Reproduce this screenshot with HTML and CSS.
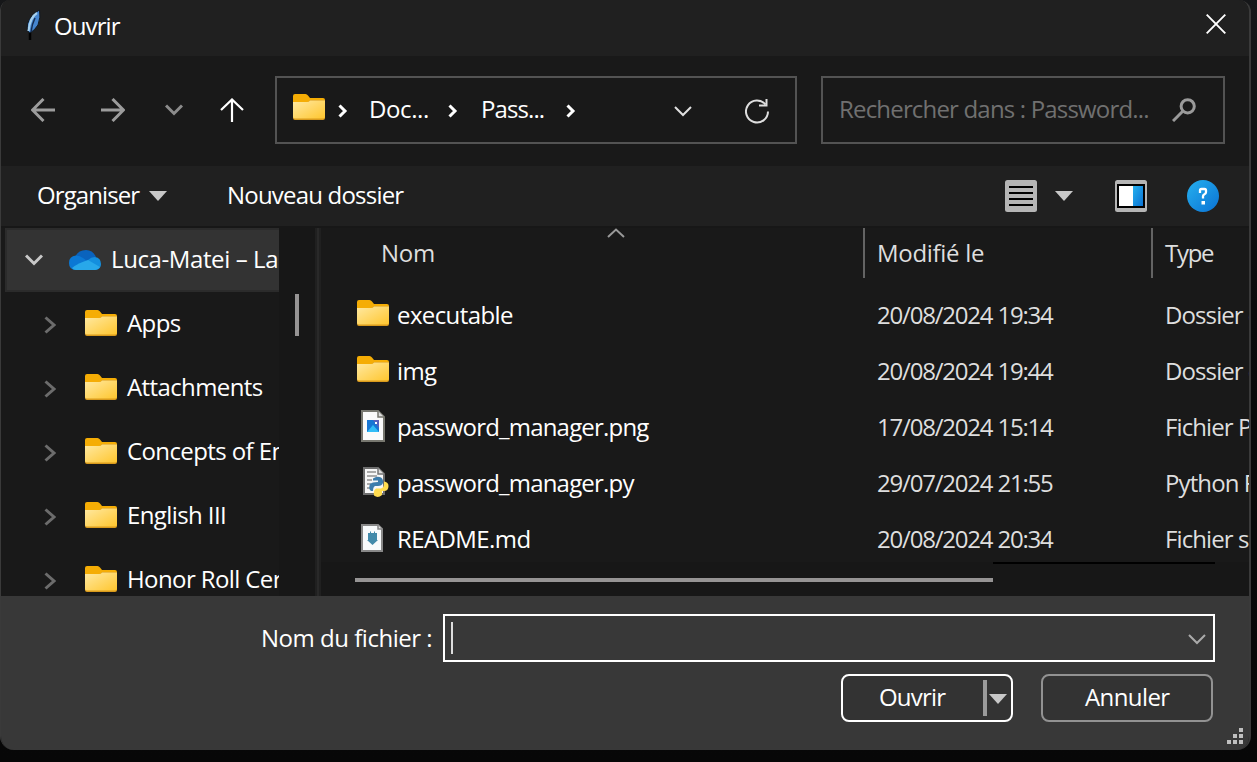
FILE: index.html
```html
<!DOCTYPE html>
<html lang="fr">
<head>
<meta charset="utf-8">
<title>Ouvrir</title>
<link rel="stylesheet" href="styles.css">
</head>
<body>
<svg class="defs" width="0" height="0">
  <defs>
    <linearGradient id="gold" x1="0" y1="0" x2="1" y2="1"><stop offset="0" stop-color="#ffe9a2"/><stop offset="1" stop-color="#ffc62e"/></linearGradient>
    <linearGradient id="blue" x1="0" y1="0" x2="1" y2="1"><stop offset="0" stop-color="#26b0ee"/><stop offset="1" stop-color="#0a72d4"/></linearGradient>
    <symbol id="folder" viewBox="0 0 32 26">
      <path d="M0 2Q0 0 2 0H12.500Q14 0 15 1.500L17 4H30Q32 4 32 6V20H0Z" fill="#f5ad05"/>
      <path d="M0 8H14Q16 8 17 6H32V24Q32 26 30 26H2Q0 26 0 24Z" fill="#d99a1c"/>
      <path d="M0 8H14Q16 8 17 6.500H32V23Q32 24.500 30 24.500H2Q0 24.500 0 23Z" fill="url(#gold)"/>
    </symbol>
    <symbol id="right" viewBox="0 0 12 18"><path d="M1.500 1.500L10 9L1.500 16.500" fill="none" stroke="#6c6c6c" stroke-width="3"/></symbol>
    <symbol id="crumb" viewBox="0 0 10 14"><path d="M1.500 1.500L7 7L1.500 12.500" fill="none" stroke="#fff" stroke-width="3"/></symbol>
    <symbol id="tri" viewBox="0 0 18 10"><path d="M0 0H18L9 10Z" fill="#c8c8c8"/></symbol>
  </defs>
</svg>
<div class="window">
  <header class="titlebar">
    <svg class="feather" viewBox="0 0 18 32"><path d="M6 22V31" stroke="#000" stroke-width="2.500"/><path d="M15.500 1Q17 8 14 16Q11 21 6 24Q2.500 23 3.500 15Q6 6 15.500 1Z" fill="#4585cf" stroke="#101820" stroke-width="1"/><path d="M13 4Q6 8 4.500 22" fill="none" stroke="#a5d0ee" stroke-width="2.200"/><path d="M11 9Q8 15 7 23" fill="none" stroke="#142c50" stroke-width="1.500"/></svg>
    <span class="t title">Ouvrir</span>
    <svg class="close" viewBox="0 0 20 20"><path d="M.7.700L19.300 19.300M19.300.7L.7 19.300" stroke="#fff" stroke-width="1.900"/></svg>
  </header>

  <nav class="navbar">
    <svg class="back" viewBox="0 0 24 24"><path d="M24 12H2M12.500 1L1.500 12L12.500 23" fill="none" stroke="#9c9c9c" stroke-width="3"/></svg>
    <svg class="fwd" viewBox="0 0 24 24"><path d="M0 12H22M11.500 1L22.500 12L11.500 23" fill="none" stroke="#9c9c9c" stroke-width="3"/></svg>
    <svg class="recent" viewBox="0 0 18 12"><path d="M1 1.500L9 9.500L17 1.500" fill="none" stroke="#8c8c8c" stroke-width="3"/></svg>
    <svg class="up" viewBox="0 0 24 24"><path d="M12 24V2M1 12L12 1.500L23 12" fill="none" stroke="#fff" stroke-width="2.200"/></svg>
    <div class="address">
      <svg class="folder"><use href="#folder"/></svg>
      <svg class="crumb c1"><use href="#crumb"/></svg>
      <span class="t doc">Doc...</span>
      <svg class="crumb c2"><use href="#crumb"/></svg>
      <span class="t pass">Pass...</span>
      <svg class="crumb c3"><use href="#crumb"/></svg>
      <svg class="drop" viewBox="0 0 18 11"><path d="M1 1L9 9L17 1" fill="none" stroke="#e0e0e0" stroke-width="2"/></svg>
      <svg class="reload" viewBox="0 0 24 26"><path d="M20.500 6.500A11 11 0 1 0 23 13.500" fill="none" stroke="#dedede" stroke-width="2"/><path d="M21.500 1V7.500H14" fill="none" stroke="#dedede" stroke-width="2"/></svg>
    </div>
    <div class="search">
      <span class="t query">Rechercher dans : Password...</span>
      <svg class="lens" viewBox="0 0 24 24"><circle cx="15.700" cy="8.300" r="6.600" fill="none" stroke="#9a9a9a" stroke-width="3"/><path d="M11 13L1 23" stroke="#9a9a9a" stroke-width="3"/></svg>
    </div>
  </nav>

  <div class="toolbar">
    <span class="t organise">Organiser</span>
    <svg class="tri t1"><use href="#tri"/></svg>
    <span class="t newdir">Nouveau dossier</span>
    <svg class="view" viewBox="0 0 32 32"><rect width="32" height="32" rx="2.500" fill="#b5b5b5"/><path d="M4 7H28M4 13H28M4 19H28M4 25H28" stroke="#000" stroke-width="2"/></svg>
    <svg class="tri t2"><use href="#tri"/></svg>
    <svg class="preview" viewBox="0 0 32 32"><rect width="32" height="32" rx="2.500" fill="#b5b5b5"/><rect x="2" y="4" width="28" height="24" fill="#000"/><rect x="4" y="6" width="14" height="20" fill="#fff"/><rect x="18" y="6" width="10" height="20" fill="url(#blue)"/></svg>
    <svg class="help" viewBox="0 0 32 32"><circle cx="16" cy="16" r="16" fill="url(#blue)"/><path d="M13 13V10.500Q13 9 14.500 9H17.500Q19 9 19 10.500V12Q19 13.500 17.500 14.200Q16 15 16 16V18.500" fill="none" stroke="#fff" stroke-width="2.300"/><rect x="14.500" y="21" width="3.500" height="3.500" fill="#fff"/></svg>
  </div>

  <main class="content">
    <aside class="tree">
      <div class="node root">
        <svg class="open" viewBox="0 0 18 12"><path d="M1 1.500L9 9.500L17 1.500" fill="none" stroke="#c8c8c8" stroke-width="3"/></svg>
        <svg class="cloud" viewBox="0 0 32 20"><path d="M6 7Q9 0 17 0Q24 0 27 7L18 14L4 9Z" fill="#0a63bd"/><path d="M7 5.500Q11 5.500 14 8L21 13L9 20H6Q0 19 0 13Q0 6 7 5.500Z" fill="#0b78d4"/><path d="M19 10Q22 7 26 7Q32 8 32 14Q32 19 27 20H15Z" fill="#148fde"/><path d="M3 18Q9 13 19 10L31 17Q29 20 26 20H7Q4 20 3 18Z" fill="#28a8ea"/></svg>
        <span class="t luca">Luca-Matei – La</span>
      </div>
      <div class="node"><svg class="right"><use href="#right"/></svg><svg class="folder"><use href="#folder"/></svg><span class="t">Apps</span></div>
      <div class="node"><svg class="right"><use href="#right"/></svg><svg class="folder"><use href="#folder"/></svg><span class="t">Attachments</span></div>
      <div class="node"><svg class="right"><use href="#right"/></svg><svg class="folder"><use href="#folder"/></svg><span class="t">Concepts of En</span></div>
      <div class="node"><svg class="right"><use href="#right"/></svg><svg class="folder"><use href="#folder"/></svg><span class="t">English III</span></div>
      <div class="node"><svg class="right"><use href="#right"/></svg><svg class="folder"><use href="#folder"/></svg><span class="t">Honor Roll Cer</span></div>
    </aside>
    <div class="vscroll"><div class="vthumb"></div></div>
    <div class="splitter"></div>
    <section class="files">
      <div class="heads">
        <div class="head name"><span class="t nom">Nom</span><svg class="sort" viewBox="0 0 18 10"><path d="M1 9L9 1.500L17 9" fill="none" stroke="#999" stroke-width="2"/></svg></div>
        <div class="head"><span class="t modif">Modifié le</span></div>
        <div class="head"><span class="t type">Type</span></div>
      </div>
      <div class="rows">
        <div class="row"><div class="cell file"><svg class="folder"><use href="#folder"/></svg><span class="t">executable</span></div><span class="t date">20/08/2024 19:34</span><span class="t kind">Dossier d</span></div>
        <div class="row"><div class="cell file"><svg class="folder"><use href="#folder"/></svg><span class="t">img</span></div><span class="t date">20/08/2024 19:44</span><span class="t kind">Dossier d</span></div>
        <div class="row"><div class="cell file"><svg class="doc-icon" viewBox="0 0 32 32"><path d="M5 1H21L27 7V31H5Z" fill="#fafafa" stroke="#77776f" stroke-width="2"/><path d="M21 1V7H27" fill="#ddd" stroke="#77776f" stroke-width="1.500"/><rect x="10" y="10" width="12" height="12" fill="#1876d4"/><path d="M16 10H22V18Z" fill="#5961bd"/><path d="M10 22L16 15L22 22Z" fill="#32bdf6"/><rect x="18" y="12" width="2" height="2" fill="#fff"/></svg><span class="t long">password_manager.png</span></div><span class="t date">17/08/2024 15:14</span><span class="t kind">Fichier P</span></div>
        <div class="row"><div class="cell file"><svg class="doc-icon" viewBox="0 0 32 32"><path d="M7 2H21L27 8V28H7Z" fill="#f7f7f7" stroke="#6e6e6e" stroke-width="2"/><path d="M21 2V8H27" fill="#ddd" stroke="#777" stroke-width="1.500"/><path d="M10 6H19M10 10H20M10 14H15M10 18H14M10 22H14" stroke="#aaa" stroke-width="2"/><path d="M16 12.500Q20 9.500 24 11.500Q26.500 13 26 17Q25 20 21 20H18Q16 21 16 25H14Q11 23 13 18Q15 16 21 16V14.500H16Z" fill="#3d7dac"/><path d="M27 15.500Q31.500 16 31.500 20Q31.500 25 27 25H25V29Q21 32.500 17 29.500Q16 24 19 22.500H24Q27 21.500 27 18Z" fill="#ffdc50"/></svg><span class="t long">password_manager.py</span></div><span class="t date">29/07/2024 21:55</span><span class="t kind">Python F</span></div>
        <div class="row"><div class="cell file"><svg class="doc-icon" viewBox="0 0 32 32"><path d="M5 3H21L25 7V29H5Z" fill="#f8fafb" stroke="#888" stroke-width="2"/><path d="M21 3V7H25" fill="#ddd" stroke="#888" stroke-width="1.500"/><path d="M11 11H13V9.500H14V11H17V9.500H18V11H20V18H21L15.500 23L10 18H11Z" fill="#438aaa"/></svg><span class="t">README.md</span></div><span class="t date">20/08/2024 20:34</span><span class="t kind">Fichier s</span></div>
      </div>
      <div class="hscroll"><div class="hthumb"></div><div class="hline"></div></div>
    </section>
  </main>

  <footer class="footer">
    <div class="namebar">
      <span class="t label">Nom du fichier :</span>
      <div class="input"><div class="caret"></div><svg class="drop2" viewBox="0 0 18 11"><path d="M1 1L9 9L17 1" fill="none" stroke="#aaa" stroke-width="2"/></svg></div>
    </div>
    <div class="actions">
      <div class="btn primary"><span class="t ok">Ouvrir</span><div class="bar"></div><svg class="tri"><use href="#tri"/></svg></div>
      <div class="btn"><span class="t cancel">Annuler</span></div>
    </div>
    <svg class="grip" viewBox="0 0 16 16"><path d="M12 0h4v4h-4zM6 6h4v4H6zM12 6h4v4h-4zM0 12h4v4H0zM6 12h4v4H6zM12 12h4v4h-4z" fill="#bfbfbf"/></svg>
  </footer>
</div>
</body>
</html>
```
FILE: styles.css
```css
* { box-sizing: border-box; }
body { margin: 0; width: 1257px; height: 762px; overflow: hidden; background: linear-gradient(#161719, #0b0b0c 40%, #070707); font-family: "Open Sans", "Noto Sans", sans-serif; font-size: 24px; color: #fff; }
svg { display: block; flex: none; }
.defs { position: absolute; }
.t { white-space: pre; line-height: 32px; letter-spacing: -0.6px; flex: none; }
.window { width: 1251px; height: 750px; border: solid #3a3a3a; border-width: 0 2px 0 1px; border-radius: 10px 12px 14px 14px; overflow: hidden; display: flex; flex-direction: column; background: #191919; }

.titlebar { height: 56px; background: #202020; display: flex; align-items: flex-start; flex: none; }
.feather { width: 18px; height: 32px; margin: 9px 0 0 23px; }
.title { margin: 10px 0 0 12px; letter-spacing: -0.9px; }
.close { width: 20px; height: 20px; margin: 14px 23px 0 auto; }

.navbar { height: 110px; flex: none; display: flex; align-items: center; padding: 0 0 2px 30px; }
.back, .fwd, .up { width: 24px; height: 24px; }
.fwd { margin-left: 46px; }
.recent { width: 18px; height: 12px; margin-left: 40px; }
.up { margin-left: 37px; }
.address { width: 522px; height: 68px; border: 2px solid #535353; margin-left: 31px; display: flex; align-items: center; padding: 0 26px 2px 16px; }
.folder { width: 32px; height: 26px; margin-bottom: 4px; }
.crumb { width: 10px; height: 14px; margin-top: 3px; }
.c1 { margin-left: 13px; }
.doc { margin-left: 21px; width: 62px; letter-spacing: -0.4px; }
.c2 { margin-left: 17px; }
.pass { margin-left: 23px; width: 65px; letter-spacing: -0.9px; }
.c3 { margin-left: 20px; }
.drop { width: 18px; height: 11px; margin: 5px 0 0 auto; }
.reload { width: 24px; height: 26px; margin: 3px 0 0 53px; }
.search { width: 404px; height: 68px; border: 2px solid #535353; margin-left: 24px; padding: 0 27px 2px 16px; display: flex; align-items: center; justify-content: space-between; color: #707070; }
.query { letter-spacing: -0.82px; }
.lens { width: 24px; height: 24px; margin-top: 2px; }

.toolbar { height: 62px; flex: none; background: #202020; border-bottom: 2px solid #171717; display: flex; align-items: center; padding-left: 36px; }
.toolbar .t { margin-bottom: 2px; }
.organise { width: 103px; letter-spacing: -0.9px; }
.tri { width: 18px; height: 10px; }
.t1 { margin-left: 9px; }
.newdir { margin-left: 60px; width: 177px; letter-spacing: -0.8px; }
.view { width: 32px; height: 32px; margin-left: auto; }
.t2 { margin-left: 18px; }
.preview { width: 32px; height: 32px; margin-left: 42px; }
.help { width: 32px; height: 32px; margin: 0 30px 0 40px; }

.content { height: 368px; flex: none; display: flex; }
.tree { width: 278px; padding-left: 4px; overflow: hidden; }
.node { height: 64px; display: flex; align-items: center; padding-left: 39px; }
.node .t { margin-bottom: 2px; }
.root { background: #333; border: 2px solid #2b2b2b; border-right: 0; padding-left: 18px; }
.open { width: 18px; height: 12px; }
.cloud { width: 32px; height: 20px; margin-left: 26px; }
.luca { margin-left: 10px; letter-spacing: -0.4px; }
.right { width: 12px; height: 18px; margin-top: 2px; }
.node .folder { margin: 0 10px 2px 29px; }
.vscroll { width: 36px; background: #171717; padding: 66px 0 0 16px; }
.vthumb { width: 4px; height: 42px; background: #969494; }
.splitter { width: 6px; border: solid #202020; border-width: 0 2px; background: #292929; }
.files { flex: 1; min-width: 0; display: flex; flex-direction: column; }
.heads { display: grid; grid-template-columns: 542px 288px 1fr; height: 50px; color: #dedede; flex: none; }
.head { border-left: 2px solid #636363; padding: 9px 0 0 12px; overflow: hidden; display: flex; align-items: flex-start; }
.head.name { border: 0; padding-left: 60px; }
.nom { width: 54px; letter-spacing: -0.3px; }
.modif { letter-spacing: -0.3px; }
.type { letter-spacing: -1.3px; }
.sort { width: 18px; height: 10px; margin: -9px 0 0 172px; }
.rows { height: 284px; padding-top: 9px; overflow: hidden; flex: none; }
.row { height: 56px; display: grid; grid-template-columns: 556px 288px 1fr; align-items: center; color: #dedede; overflow: hidden; }
.file { display: flex; align-items: center; padding-left: 36px; color: #fff; }
.doc-icon { width: 32px; height: 32px; margin-bottom: 2px; }
.file .t { margin-left: 8px; }
.file .long { letter-spacing: -0.8px; }
.date { letter-spacing: -1.2px; }
.kind { overflow: hidden; letter-spacing: -0.9px; }
.hscroll { flex: 1; background: #171717; display: flex; padding-left: 34px; }
.hthumb { width: 638px; height: 4px; background: #969494; margin-top: 16px; }
.hline { width: 222px; height: 2px; background: #000; }

.footer { flex: 1; background: #383838; padding: 18px 0 0 260px; position: relative; }
.namebar { display: flex; height: 48px; align-items: center; }
.label { width: 182px; letter-spacing: -0.48px; margin-bottom: 1px; }
.input { width: 772px; height: 48px; border: 2px solid #fff; display: flex; align-items: center; padding: 0 7px 0 6px; }
.caret { width: 2px; height: 32px; background: #ddd; }
.drop2 { width: 18px; height: 11px; margin: 3px 0 0 auto; }
.actions { display: flex; gap: 28px; margin: 12px 0 0 580px; }
.btn { width: 172px; height: 48px; border: 2px solid #929292; border-radius: 8px; background: #333; display: flex; align-items: center; padding: 0 0 2px 42px; }
.primary { border-color: #fff; padding-left: 36px; }
.ok { width: 67px; letter-spacing: -0.8px; }
.bar { width: 4px; height: 36px; background: #9b9b9b; margin: 2px 2px 0 37px; }
.primary .tri { margin-top: 4px; }
.grip { position: absolute; right: 6px; bottom: 6px; width: 16px; height: 16px; }
```
